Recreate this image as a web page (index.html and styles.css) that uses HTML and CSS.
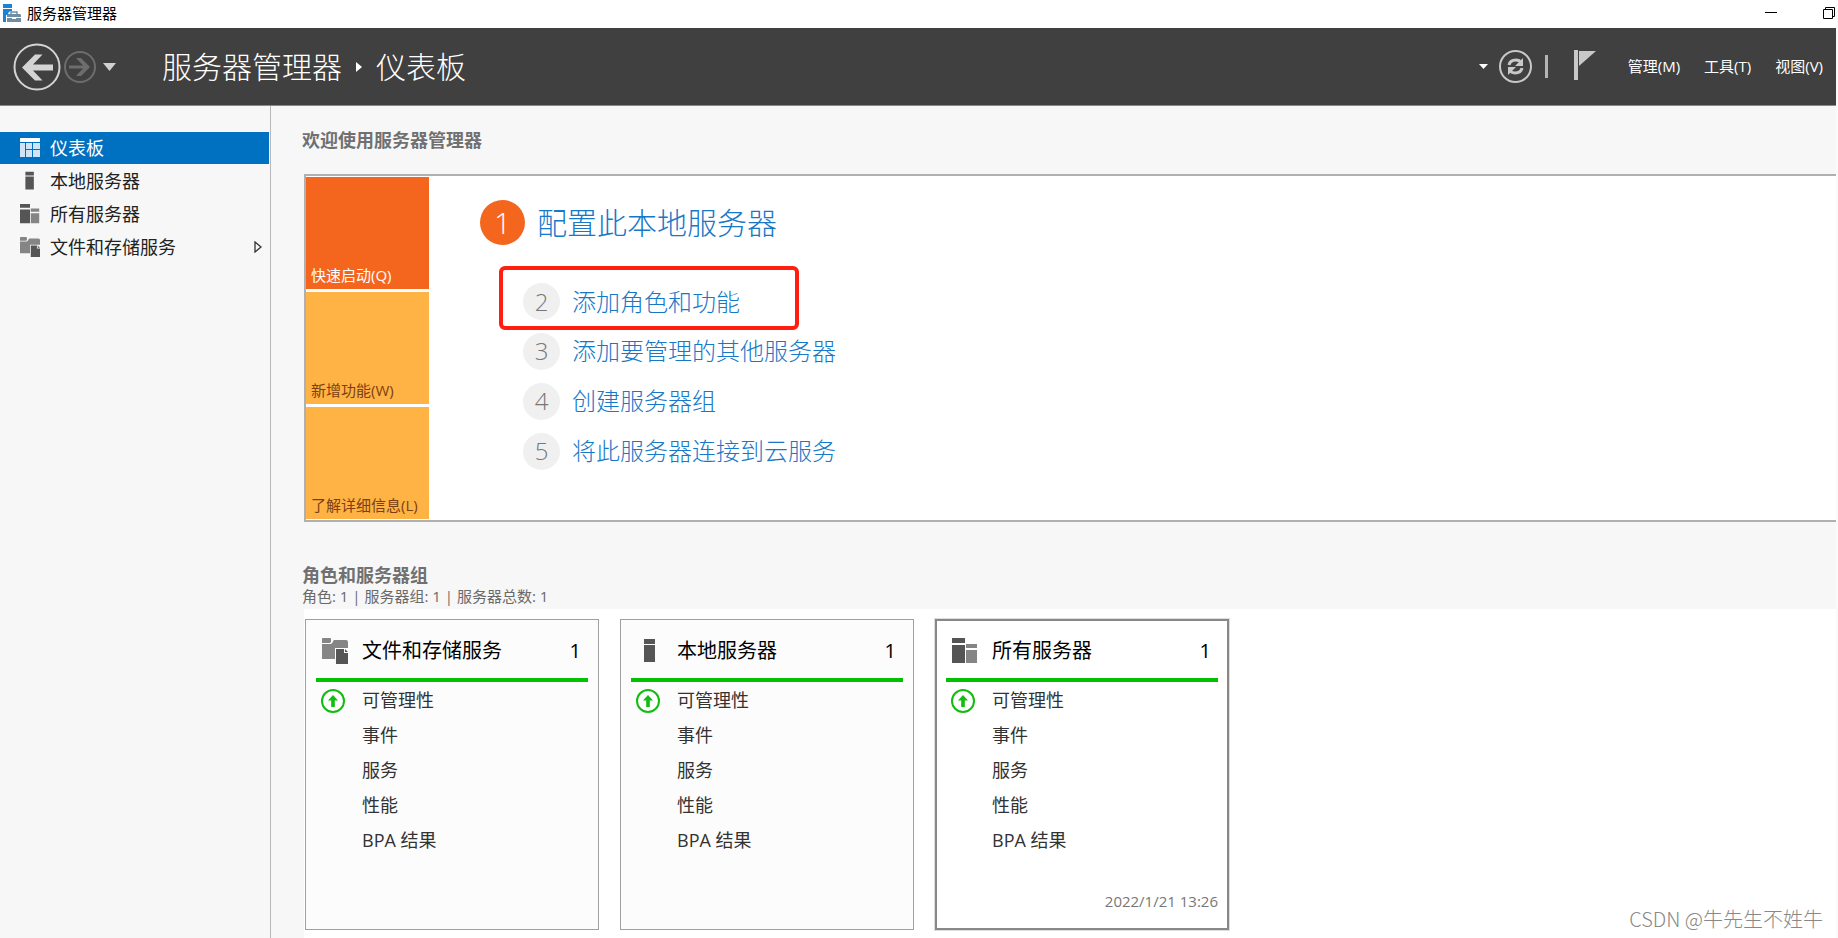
FILE: index.html
```html
<!DOCTYPE html>
<html lang="zh-CN">
<head>
<meta charset="utf-8">
<title>服务器管理器</title>
<link rel="stylesheet" href="styles.css">
</head>
<body>
<svg class="defs" aria-hidden="true">
  <symbol id="i-server" viewBox="0 0 26 26"><path fill="#555" d="M7 1h11v5H7zM7 7h11v17H7z"/></symbol>
  <symbol id="i-servers" viewBox="0 0 26 26"><path fill="#555" d="M0 0h13v5H0zM0 7h13v18H0z"/><path fill="#858585" d="M14 6h11v4H14zM14 12h11v13H14z"/></symbol>
  <symbol id="i-files" viewBox="0 0 26 26"><path fill="#858585" d="M0 1q0-1 1-1h7q1 0 1 1v3l-1 1H0V3zM0 6h9l2-2V3l1-1h12q2 0 2 2v6H13v11H0z"/><path fill="#555" d="M14 11h8v4h4v11H14zM23 11l3 3h-3z"/></symbol>
  <symbol id="i-up" viewBox="0 0 24 24"><circle cx="12" cy="12" r="11" fill="#fff" stroke="#12bd12" stroke-width="2"/><path fill="#12bd12" d="M12 6l5 5.500h-3.200V18h-3.600v-6.500H7z"/></symbol>
</svg>

<header class="titlebar">
  <svg class="app-icon" viewBox="0 0 18 18"><path fill="#1883d7" d="M0 0h9v4H0zM0 5h9v2q-4 0-4 4H3v7H0z"/><path fill="#6f8ea6" d="M5 10h12l1 1v2H4v-2zM4 14h5v1h4v-1h5v4H4z"/><path fill="none" stroke="#6f8ea6" stroke-width="1.500" d="M8 10V8h6v2"/></svg>
  <span class="window-name">服务器管理器</span>
  <button class="win-btn" aria-label="最小化"><svg viewBox="0 0 12 12"><path stroke="#000" d="M0 5.500h12"/></svg></button>
  <button class="win-btn" aria-label="还原"><svg viewBox="0 0 12 12"><path fill="none" stroke="#000" d="M.5 2.500h9v9h-9zM2.500 2V.5h9v9H10"/></svg></button>
</header>

<nav class="toolbar">
  <button class="icon-btn" aria-label="后退"><svg class="back" viewBox="0 0 48 48"><circle cx="24" cy="24" r="22.500" fill="none" stroke="#d4d4d4" stroke-width="2"/><path fill="#d4d4d4" d="M9 24.500L22 11.500h7.500L20 21.500h20v6H20l9.500 10H22z"/></svg></button>
  <button class="icon-btn" aria-label="前进"><svg class="forward" viewBox="0 0 32 32"><circle cx="16" cy="16" r="15" fill="none" stroke="#6d6d6d" stroke-width="2"/><path fill="#6d6d6d" d="M26 16l-9 9h-5l7-7.500H5v-3h14L12 7h5z"/></svg></button>
  <button class="icon-btn history" aria-label="历史记录"><svg class="caret" viewBox="0 0 13 8"><path fill="#d0d0d0" d="M0 0h13L6.500 8z"/></svg></button>
  <h1 class="crumbs"><span>服务器管理器</span><svg class="crumb-arrow" viewBox="0 0 6 10"><path fill="#fff" d="M0 0l6 5-6 5z"/></svg><span>仪表板</span></h1>
  <button class="icon-btn" aria-label="刷新选项"><svg class="caret-small" viewBox="0 0 9 5"><path fill="#fff" d="M0 0h9L4.500 5z"/></svg></button>
  <button class="icon-btn refresh" aria-label="刷新"><svg viewBox="0 0 33 33"><circle cx="16.500" cy="16.500" r="15.500" fill="none" stroke="#c8c8c8" stroke-width="2"/><path fill="none" stroke="#c8c8c8" stroke-width="3" d="M10 15q1-5 7-5 3 0 5 2M23 18q-1 5-7 5-3 0-5-2"/><path fill="#c8c8c8" d="M24 8v8h-8zM9 25v-8h8z"/></svg></button>
  <span class="divider"></span>
  <button class="icon-btn flag" aria-label="通知"><svg viewBox="0 0 22 30"><path fill="#c8c8c8" d="M0 0h4v30H0z"/><path fill="#c8c8c8" d="M5 1h17L5 16z"/></svg></button>
  <button class="menu">管理(M)</button>
  <button class="menu">工具(T)</button>
  <button class="menu">视图(V)</button>
</nav>

<div class="body">
  <aside class="sidebar">
    <a class="side-item active" href="#dashboard"><svg viewBox="0 0 20 20"><path fill="#fff" d="M0 0h20v4H0z"/><path fill="#cfe4f4" d="M0 5h5v14H0zM6 5h6v6H6zM13 5h7v6h-7zM6 12h6v7H6zM13 12h7v7h-7z"/></svg>仪表板</a>
    <a class="side-item" href="#local"><svg><use href="#i-server"/></svg>本地服务器</a>
    <a class="side-item" href="#all"><svg><use href="#i-servers"/></svg>所有服务器</a>
    <a class="side-item" href="#files"><svg><use href="#i-files"/></svg>文件和存储服务<svg class="expand" viewBox="0 0 8 12"><path fill="none" stroke="#333" stroke-width="1.300" d="M1 1l6 5-6 5z"/></svg></a>
  </aside>

  <main class="content">
    <h2 class="heading">欢迎使用服务器管理器</h2>
    <section class="welcome">
      <div class="tiles">
        <button class="tile selected">快速启动(Q)</button>
        <button class="tile">新增功能(W)</button>
        <button class="tile">了解详细信息(L)</button>
      </div>
      <div class="steps">
        <a class="step primary" href="#configure"><span class="num">1</span>配置此本地服务器</a>
        <a class="step marked" href="#roles"><span class="num">2</span>添加角色和功能</a>
        <a class="step" href="#servers"><span class="num">3</span>添加要管理的其他服务器</a>
        <a class="step" href="#group"><span class="num">4</span>创建服务器组</a>
        <a class="step" href="#cloud"><span class="num">5</span>将此服务器连接到云服务</a>
      </div>
    </section>

    <h2 class="heading groups-heading">角色和服务器组</h2>
    <p class="summary">角色: 1 | 服务器组: 1 | 服务器总数: 1</p>

    <section class="cards">
      <article class="card">
        <h3 class="card-head"><svg><use href="#i-files"/></svg><span class="card-name">文件和存储服务</span><span>1</span></h3>
        <ul class="card-list">
          <li><svg><use href="#i-up"/></svg>可管理性</li><li>事件</li><li>服务</li><li>性能</li><li>BPA 结果</li>
        </ul>
      </article>
      <article class="card">
        <h3 class="card-head"><svg><use href="#i-server"/></svg><span class="card-name">本地服务器</span><span>1</span></h3>
        <ul class="card-list">
          <li><svg><use href="#i-up"/></svg>可管理性</li><li>事件</li><li>服务</li><li>性能</li><li>BPA 结果</li>
        </ul>
      </article>
      <article class="card current">
        <h3 class="card-head"><svg><use href="#i-servers"/></svg><span class="card-name">所有服务器</span><span>1</span></h3>
        <ul class="card-list">
          <li><svg><use href="#i-up"/></svg>可管理性</li><li>事件</li><li>服务</li><li>性能</li><li>BPA 结果</li>
        </ul>
        <time class="stamp">2022/1/21 13:26</time>
      </article>
    </section>
  </main>
</div>
<span class="watermark">CSDN @牛先生不姓牛</span>
</body>
</html>
```
FILE: styles.css
```css
* { box-sizing: border-box; }

body {
  margin: 0;
  min-height: 100vh;
  display: flex;
  flex-direction: column;
  background: #f7f7f7;
  border-right: 2px solid #fafafa;
  color: #333;
  font-family: "Open Sans", "Noto Sans CJK SC", sans-serif;
  font-size: 18px;
  line-height: 1.5;
}

h1, h2, h3, p, ul { margin: 0; padding: 0; font-weight: 400; }
ul { list-style: none; }
a { color: inherit; text-decoration: none; }
button { margin: 0; padding: 0; border: 0; background: none; font: inherit; color: inherit; }
svg { display: block; flex: none; }
.defs { position: absolute; width: 0; height: 0; }

.titlebar {
  display: flex;
  align-items: center;
  height: 28px;
  padding: 0 1px 2px 3px;
  background: #fff;
  color: #000;
  font-size: 15px;
}
.app-icon { width: 18px; height: 18px; margin-right: 6px; }
.window-name { flex: 1; }
.win-btn { margin-left: 46px; }
.win-btn svg { width: 12px; height: 12px; }

.toolbar {
  display: flex;
  align-items: center;
  height: 78px;
  padding: 0 13px 0 13px;
  background: #404040;
  border-bottom: 1px solid #8a8a8a;
  color: #fff;
}
.back { width: 48px; height: 48px; }
.forward { width: 32px; height: 32px; margin-left: 3px; }
.history { margin-left: 7px; }
.caret { width: 13px; height: 8px; }
.crumbs {
  flex: 1;
  display: flex;
  align-items: center;
  margin-left: 46px;
  font-size: 30px;
  font-weight: 300;
}
.crumb-arrow { width: 6px; height: 10px; margin: 0 14px; }
.caret-small { width: 9px; height: 5px; }
.refresh { margin-left: 11px; }
.refresh svg { width: 33px; height: 33px; }
.divider { width: 3px; height: 23px; margin: 0 26px 0 13px; background: #b5b5b5; }
.flag { margin-right: 8px; }
.flag svg { width: 22px; height: 30px; margin-bottom: 4px; }
.menu { margin-left: 24px; font-size: 15px; }

.body { flex: 1; display: flex; }

.sidebar {
  width: 271px;
  flex: none;
  padding-top: 26px;
  padding-right: 1px;
  border-right: 1px solid #b8b8b8;
}
.side-item {
  display: flex;
  align-items: center;
  gap: 10px;
  height: 32px;
  margin-bottom: 1px;
  padding: 0 7px 0 20px;
  color: #222;
}
.side-item svg { width: 20px; height: 20px; }
.side-item .expand { width: 8px; height: 12px; margin-left: auto; }
.side-item.active { background: #0070c0; color: #fff; }

.content { flex: 1; min-width: 0; padding: 21px 0 0 31px; }
.heading {
  font-size: 18px;
  line-height: 26px;
  font-weight: 600;
  color: #707070;
}

.welcome {
  display: flex;
  margin: 21px 0 0 2px;
  background: #fff;
  border: 2px solid #b0b0b0;
  border-right: 0;
  padding: 1px 0;
}
.tiles { display: flex; flex-direction: column; gap: 3px; width: 123px; flex: none; }
.tile {
  display: flex;
  align-items: flex-end;
  height: 112px;
  padding: 0 5px 3px;
  background: #ffb344;
  color: #7c3f12;
  font-size: 15px;
  white-space: nowrap;
}
.tile.selected { background: #f4661e; color: #fff; }

.steps { padding: 23px 0 0 51px; font-weight: 300; }
.step {
  display: flex;
  align-items: center;
  gap: 12px;
  width: 400px;
  height: 50px;
  padding-left: 43px;
  font-size: 24px;
  color: #1878c8;
  white-space: nowrap;
}
.num {
  flex: none;
  display: grid;
  place-items: center;
  width: 37px;
  height: 37px;
  border-radius: 50%;
  background: #f0f0f0;
  color: #777;
}
.step.primary { height: 45px; padding: 0; margin-bottom: 21px; font-size: 30px; }
.primary .num { width: 45px; height: 45px; background: #f4661e; color: #fff; }
.step.marked {
  width: 300px;
  height: 64px;
  margin: 0 0 -4px 19px;
  padding: 7px 0 0 20px;
  border: 4px solid #ff1e10;
  border-radius: 6px;
}

.groups-heading { margin-top: 42px; line-height: 23px; }
.summary { font-size: 15px; line-height: 18px; color: #6a6a6a; }

.cards {
  display: flex;
  gap: 21px;
  margin: 4px 0 0 2px;
  padding: 10px 0 8px 1px;
  background: #fff;
}
.card {
  display: flex;
  flex-direction: column;
  width: 294px;
  height: 311px;
  padding: 9px 10px;
  background: #fcfcfc;
  border: 1px solid #a0a0a0;
}
.card.current { background: #fff; border: 2px solid #888; box-shadow: 0 0 0 1px #ddd; padding: 8px 9px; }
.card-head {
  display: flex;
  align-items: center;
  height: 53px;
  padding: 0 7px 5px 6px;
  border-bottom: 4px solid #00c000;
  font-size: 20px;
  color: #000;
}
.card-head svg { width: 26px; height: 26px; margin-right: 14px; }
.card-name { flex: 1; }
.card-list { padding-top: 1px; }
.card-list li {
  display: flex;
  align-items: center;
  height: 35px;
  padding-left: 46px;
}
.card-list svg { width: 24px; height: 24px; margin: 0 17px 0 -41px; }
.stamp { margin-top: auto; text-align: right; font-size: 15px; line-height: 22px; color: #777; padding-bottom: 8px; }

.watermark {
  position: absolute;
  right: 15px;
  bottom: 4px;
  font-family: "Noto Sans CJK SC", sans-serif;
  font-size: 20px;
  font-weight: 300;
  color: #888;
}
```
